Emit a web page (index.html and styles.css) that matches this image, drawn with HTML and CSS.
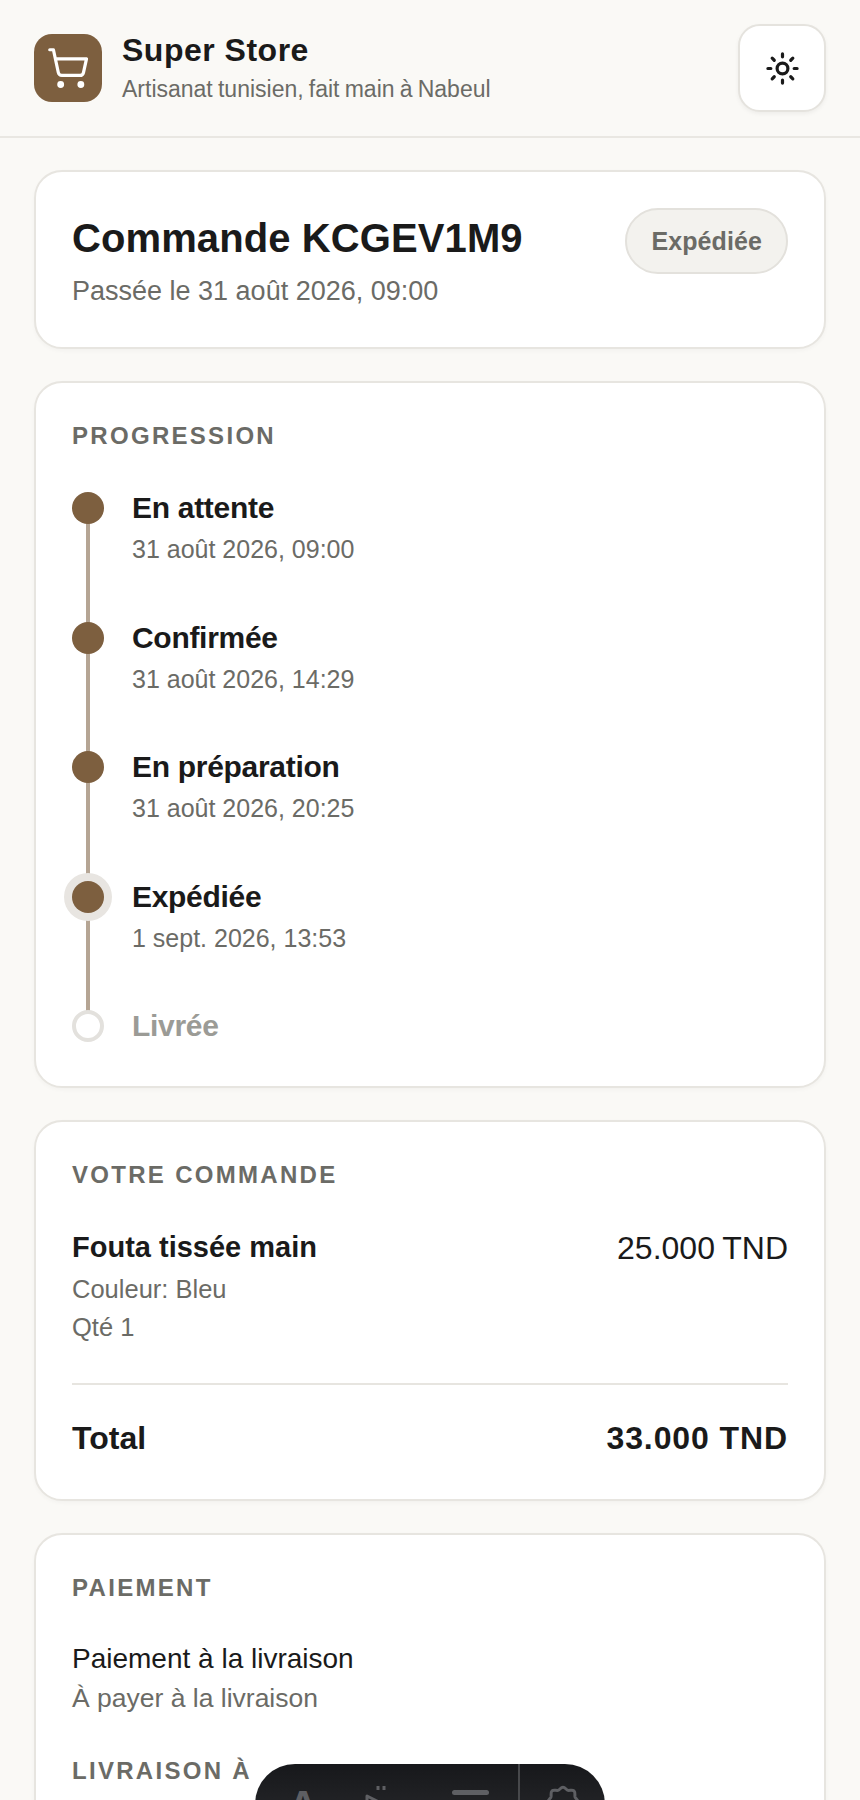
FILE: index.html
```html
<!DOCTYPE html>
<html lang="fr">
<head>
    <meta charset="UTF-8">
    <meta name="viewport" content="width=device-width, initial-scale=1.0">
    <title>Commande KCGEV1M9</title>
    <link rel="stylesheet" href="styles.css">
</head>
<body>
    <header class="entete">
        <div class="marque">
            <div class="logo">
                <svg width="44" height="44" viewBox="0 0 24 24" fill="none" stroke="#fff" stroke-width="1.75" stroke-linecap="round" stroke-linejoin="round">
                    <circle cx="8" cy="21" r="1" fill="#fff"/>
                    <circle cx="19" cy="21" r="1" fill="#fff"/>
                    <path d="M2.05 2.05h2l2.66 12.42a2 2 0 0 0 2 1.58h9.78a2 2 0 0 0 1.95-1.57l1.65-7.43H5.12"/>
                </svg>
            </div>
            <div>
                <div class="nomBoutique">Super Store</div>
                <div class="slogan">Artisanat tunisien, fait main à Nabeul</div>
            </div>
        </div>
        <button class="boutonTheme" aria-label="Thème">
            <svg width="35" height="35" viewBox="0 0 24 24" fill="none" stroke="#1a1a1a" stroke-width="2.2" stroke-linecap="round">
                <circle cx="12" cy="12" r="3.7"/>
                <path d="M12 2v2M12 20v2M4.93 4.93l1.41 1.41M17.66 17.66l1.41 1.41M2 12h2M20 12h2M6.34 17.66l-1.41 1.41M19.07 4.93l-1.41 1.41"/>
            </svg>
        </button>
    </header>

    <main class="contenu">
        <section class="carte carteTitre">
            <div class="titreBloc">
                <h1>Commande KCGEV1M9</h1>
                <p class="date">Passée le 31 août 2026, 09:00</p>
            </div>
            <span class="statut">Expédiée</span>
        </section>

        <section class="carte">
            <h2>Progression</h2>
            <ol class="etapes">
                <li class="etape faite">
                    <span class="point"></span>
                    <div>
                        <div class="etapeNom">En attente</div>
                        <div class="etapeDate">31 août 2026, 09:00</div>
                    </div>
                </li>
                <li class="etape faite">
                    <span class="point"></span>
                    <div>
                        <div class="etapeNom">Confirmée</div>
                        <div class="etapeDate">31 août 2026, 14:29</div>
                    </div>
                </li>
                <li class="etape faite">
                    <span class="point"></span>
                    <div>
                        <div class="etapeNom">En préparation</div>
                        <div class="etapeDate">31 août 2026, 20:25</div>
                    </div>
                </li>
                <li class="etape faite actuelle">
                    <span class="point"></span>
                    <div>
                        <div class="etapeNom">Expédiée</div>
                        <div class="etapeDate">1 sept. 2026, 13:53</div>
                    </div>
                </li>
                <li class="etape aVenir">
                    <span class="point"></span>
                    <div>
                        <div class="etapeNom">Livrée</div>
                    </div>
                </li>
            </ol>
        </section>

        <section class="carte">
            <h2>Votre commande</h2>
            <div class="article">
                <div>
                    <div class="articleNom">Fouta tissée main</div>
                    <div class="articleDetail">Couleur: Bleu</div>
                    <div class="articleDetail">Qté 1</div>
                </div>
                <div class="articlePrix">25.000 TND</div>
            </div>
            <div class="total">
                <span>Total</span>
                <span class="totalPrix">33.000 TND</span>
            </div>
        </section>

        <section class="carte carteBas">
            <h2>Paiement</h2>
            <div class="ligne">Paiement à la livraison</div>
            <div class="ligneDetail">À payer à la livraison</div>
            <h2 class="titreLivraison">Livraison à</h2>
        </section>
    </main>

    <nav class="barre">
        <div class="barreCase"><span class="barreLettre">A</span></div>
        <div class="barreCase">
            <svg width="40" height="40" viewBox="0 0 40 40" fill="none" stroke="#5e5f63" stroke-width="3" stroke-linejoin="round">
                <path d="M4 12l20 10 12 26H4z"/>
                <path d="M15 2v4M21 2v4"/>
            </svg>
        </div>
        <div class="barreCase barreCaseLarge"><span class="barreTrait"></span></div>
        <div class="barreCase barreReglages">
            <svg width="40" height="40" viewBox="0 0 24 24" fill="none" stroke="#5e5f63" stroke-width="1.8" stroke-linejoin="round">
                <path d="M12 2c1.4 0 2 1.6 3 1.8 1.2.2 2.6-.6 3.6.3s.3 2.4.6 3.6c.3 1 1.8 1.6 1.8 3s-1.5 2-1.8 3c-.3 1.2.4 2.7-.6 3.6s-2.4.1-3.6.4c-1 .3-1.6 1.8-3 1.8s-2-1.5-3-1.8c-1.2-.3-2.6.5-3.6-.4s-.3-2.4-.6-3.6c-.3-1-1.8-1.6-1.8-3s1.5-2 1.8-3c.3-1.2-.4-2.7.6-3.6s2.4-.1 3.6-.3c1-.2 1.6-1.8 3-1.8z"/>
            </svg>
        </div>
    </nav>
</body>
</html>
```

FILE: styles.css
```css
* {
    box-sizing: border-box;
}
html, body {
    height: 100vh;
    overflow: hidden;
}
body {
    margin: 0;
    font-family: "Liberation Sans", Arial, sans-serif;
    background-color: #faf9f6;
    color: #1a1a1a;
}
.entete {
    display: flex;
    justify-content: space-between;
    align-items: center;
    height: 138px;
    padding: 0 34px;
    border-bottom: 2px solid #e9e7e2;
}
.marque {
    display: flex;
    align-items: center;
    gap: 20px;
}
.logo {
    width: 68px;
    height: 68px;
    border-radius: 18px;
    background-color: #7d5f3f;
    display: flex;
    align-items: center;
    justify-content: center;
}
.nomBoutique {
    font-size: 32px;
    font-weight: bold;
    line-height: 38px;
    letter-spacing: 0.5px;
    margin-top: -3px;
}
.slogan {
    font-size: 23px;
    line-height: 28px;
    margin-top: 6px;
    word-spacing: -1.2px;
    color: #6b6b66;
}
.boutonTheme {
    width: 88px;
    height: 88px;
    border-radius: 22px;
    border: 2px solid #e5e3de;
    background-color: #fff;
    box-shadow: 0 2px 4px rgba(0, 0, 0, 0.05);
    display: flex;
    align-items: center;
    justify-content: center;
    padding: 0;
}
.contenu {
    padding: 32px 34px;
    display: flex;
    flex-direction: column;
    gap: 32px;
}
.carte {
    background-color: #fff;
    border: 2px solid #e7e5e0;
    border-radius: 28px;
    padding: 36px;
    box-shadow: 0 2px 4px rgba(0, 0, 0, 0.03);
}
.carteTitre {
    display: flex;
    justify-content: space-between;
    align-items: flex-start;
}
.carteBas {
    padding-bottom: 90px;
}
.titreBloc {
    padding: 6px 0 3px;
}
h1 {
    margin: 0;
    font-size: 40px;
    line-height: 48px;
    font-weight: bold;
    letter-spacing: 0.1px;
}
.date {
    margin: 12px 0 0;
    font-size: 27px;
    line-height: 34px;
    color: #6b6b66;
}
.statut {
    padding: 0 24px;
    height: 66px;
    line-height: 62px;
    font-size: 25px;
    font-weight: bold;
    letter-spacing: 0.1px;
    color: #6b6b66;
    background-color: #f3f2ee;
    border: 2px solid #e3e1dc;
    border-radius: 33px;
}
h2 {
    margin: 0;
    font-size: 24px;
    line-height: 34px;
    font-weight: bold;
    letter-spacing: 2.3px;
    text-transform: uppercase;
    color: #6b6b66;
}
.etapes {
    list-style: none;
    margin: 39px 0 0;
    padding: 0;
}
.etape {
    position: relative;
    display: flex;
    gap: 28px;
    min-height: 129.5px;
}
.etape:last-child {
    min-height: 0;
    padding-bottom: 8px;
}
.etape.faite::before {
    content: "";
    position: absolute;
    left: 14px;
    top: 16px;
    width: 4px;
    height: 129.5px;
    background-color: #b5a594;
}
.point {
    position: relative;
    flex: none;
    width: 32px;
    height: 32px;
    border-radius: 50%;
    background-color: #7d5f3f;
}
.actuelle .point {
    box-shadow: 0 0 0 8px #e8e5e1;
}
.aVenir .point {
    background-color: #fff;
    border: 4px solid #e3e1dd;
}
.etapeNom {
    font-size: 30px;
    line-height: 32px;
    font-weight: bold;
    letter-spacing: -0.3px;
}
.aVenir .etapeNom {
    color: #9b9b96;
}
.etapeDate {
    margin-top: 10px;
    font-size: 25px;
    line-height: 30px;
    color: #6b6b66;
}
.article {
    display: flex;
    justify-content: space-between;
    margin-top: 38px;
    padding-bottom: 37px;
    border-bottom: 2px solid #e7e5e0;
}
.articleNom {
    font-size: 29px;
    line-height: 34px;
    font-weight: bold;
    margin-bottom: 6px;
}
.articleDetail {
    font-size: 25.5px;
    line-height: 38px;
    color: #6b6b66;
}
.articlePrix {
    font-size: 32px;
    line-height: 36px;
    word-spacing: -1px;
}
.total {
    display: flex;
    justify-content: space-between;
    margin: 34px 0 6px;
    font-size: 32px;
    line-height: 38px;
    font-weight: bold;
}
.totalPrix {
    font-size: 32px;
    letter-spacing: 0.9px;
}
.ligne {
    margin-top: 36px;
    font-size: 28px;
    line-height: 36px;
}
.ligneDetail {
    margin-top: 2px;
    font-size: 26.5px;
    line-height: 38px;
    color: #6b6b66;
}
.titreLivraison {
    margin-top: 37px;
}
.barre {
    position: fixed;
    left: 255px;
    top: 1764px;
    width: 350px;
    height: 92px;
    border-radius: 40px;
    background: linear-gradient(#17181b, #2f3033);
    display: flex;
    padding-left: 8px;
}
.barreCase {
    flex: none;
    width: 80px;
    display: flex;
    justify-content: center;
    padding-top: 20px;
}
.barreCaseLarge {
    width: 95px;
}
.barreReglages {
    width: 87px;
    border-left: 2px solid #47484b;
}
.barreLettre {
    font-size: 42px;
    font-weight: bold;
    color: #5e5f63;
    line-height: 44px;
}
.barreTrait {
    width: 37px;
    height: 5px;
    margin-top: 6px;
    border-radius: 3px;
    background-color: #5e5f63;
}
```
